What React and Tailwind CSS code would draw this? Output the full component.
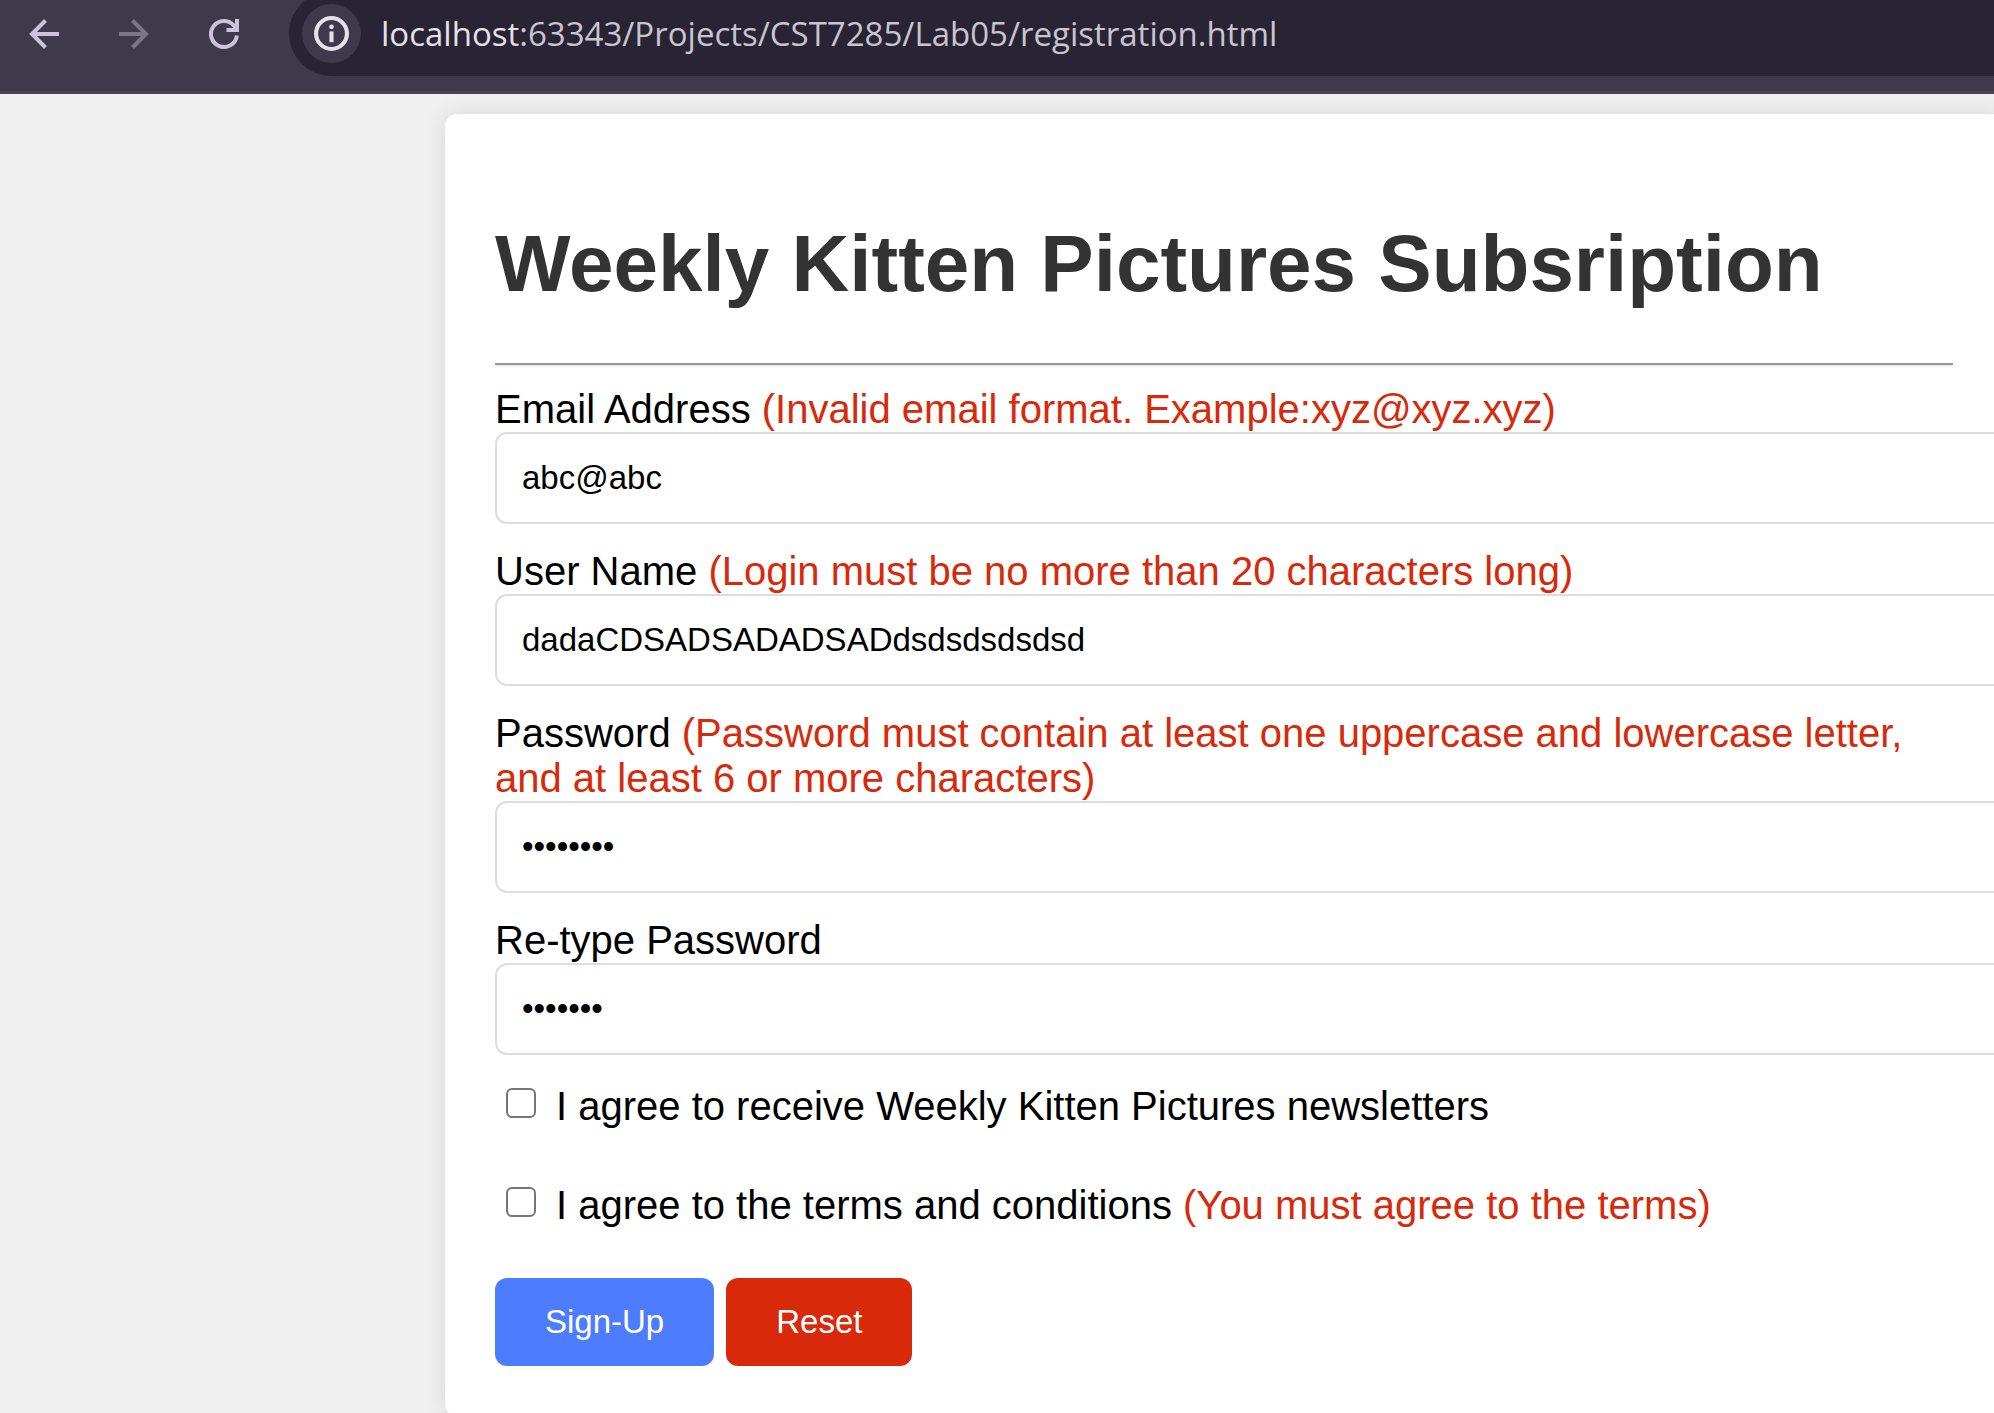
import React from "react";

function BackIcon() {
  return (
    <svg width="30" height="30" viewBox="0 0 30 30" fill="none" stroke="currentColor" strokeWidth="4" aria-hidden="true">
      <path d="M30 15H3M16.5 1.5L3 15l13.5 13.5" />
    </svg>
  );
}

function ForwardIcon() {
  return (
    <svg width="30" height="30" viewBox="0 0 30 30" fill="none" stroke="currentColor" strokeWidth="4" aria-hidden="true">
      <path d="M0 15h27M13.5 1.5L27 15 13.5 28.5" />
    </svg>
  );
}

function ReloadIcon() {
  return (
    <svg width="30" height="30" viewBox="0 0 30 30" fill="none" stroke="currentColor" strokeWidth="4" aria-hidden="true">
      <path d="M27.9 16.5A13 13 0 1 1 25 6.700L27.500 10.500" />
      <path d="M28 0v11H17.500" />
    </svg>
  );
}

function InfoIcon() {
  return (
    <svg width="35" height="35" viewBox="0 0 34 34" fill="none" aria-hidden="true">
      <circle cx="17" cy="17" r="15" stroke="currentColor" strokeWidth="4" />
      <path d="M15 15h4v10.500h-4z" fill="currentColor" />
      <circle cx="17" cy="10.500" r="2.300" fill="currentColor" />
    </svg>
  );
}

function BrowserBar() {
  return (
    <header className="shrink-0 overflow-hidden border-b-3 border-[#49454f] bg-[#3f394c] pb-[15px]">
      <div className="-mt-[9px] flex h-[85px] items-center gap-[60px] pl-[29px] text-[#ccc2dc]">
        <button type="button" aria-label="Back"><BackIcon /></button>
        <button type="button" aria-label="Forward" className="text-[#7c7786]"><ForwardIcon /></button>
        <button type="button" aria-label="Reload"><ReloadIcon /></button>
        <div className="-ml-[10px] flex h-full flex-1 items-center gap-5 rounded-l-full bg-[#282433] pl-[13px]">
          <button
            type="button"
            aria-label="Site information"
            className="flex size-[59px] items-center justify-center rounded-full bg-[#3f394c] text-[#e6e0e9]"
          >
            <InfoIcon />
          </button>
          <div className="whitespace-nowrap font-['Open_Sans','Noto_Sans',sans-serif] text-[33px] text-[#c9c4d0]">
            <span className="text-[#e6e0e9]">localhost</span>:63343/Projects/CST7285/Lab05/registration.html
          </div>
        </div>
      </div>
    </header>
  );
}

function Field({ id, label, error, type, value }) {
  return (
    <div className="mb-[25px]">
      <label htmlFor={id} className="block">
        {label} {error && <span className="text-[#d8290b]">{error}</span>}
      </label>
      <input
        id={id}
        type={type}
        defaultValue={value}
        className="block h-[92px] w-[calc(100%+54px)] rounded-xl border-2 border-[#ddd] bg-white px-[25px] text-[33px] outline-none"
      />
    </div>
  );
}

function Agreement({ id, label, error }) {
  return (
    <div className="flex items-start pl-[11px]">
      <input
        id={id}
        type="checkbox"
        className="mt-1 mr-5 size-[30px] shrink-0 appearance-none rounded-md border-2 border-[#767676] bg-white checked:bg-[#0075ff]"
      />
      <label htmlFor={id}>
        {label} {error && <span className="text-[#d8290b]">{error}</span>}
      </label>
    </div>
  );
}

export default function App() {
  return (
    <div className="flex h-screen flex-col overflow-hidden bg-[#f0f0f0] font-['Liberation_Sans',Arial,sans-serif] text-[40px] leading-[45px] text-black">
      <BrowserBar />
      <main className="flex-1 overflow-hidden pt-5">
        <form
          onSubmit={(e) => e.preventDefault()}
          className="-mr-[9px] ml-[445px] rounded-xl bg-white p-[50px] shadow-[0_0_25px_rgba(0,0,0,0.1)]"
        >
          <h1 className="mt-[54px] mb-[53px] text-[80px] leading-[92px] font-bold text-[#333]">
            Weekly Kitten Pictures Subsription
          </h1>
          <hr className="mb-5 h-1 border-t-2 border-b-2 border-t-[#9a9a9a] border-b-[#eee]" />

          <Field
            id="email"
            label="Email Address"
            error="(Invalid email format. Example:xyz@xyz.xyz)"
            type="text"
            value="abc@abc"
          />
          <Field
            id="login"
            label="User Name"
            error="(Login must be no more than 20 characters long)"
            type="text"
            value="dadaCDSADSADADSADdsdsdsdsdsd"
          />
          <Field
            id="pass"
            label="Password"
            error="(Password must contain at least one uppercase and lowercase letter, and at least 6 or more characters)"
            type="password"
            value="abcdefgh"
          />
          <Field id="pass2" label="Re-type Password" type="password" value="abcdefg" />

          <div className="mt-[29px] flex flex-col gap-[54px]">
            <Agreement id="newsletter" label="I agree to receive Weekly Kitten Pictures newsletters" />
            <Agreement
              id="terms"
              label="I agree to the terms and conditions"
              error="(You must agree to the terms)"
            />
          </div>

          <div className="mt-[50px] flex gap-3 text-[33px] text-white">
            <button type="submit" className="h-[88px] rounded-xl bg-[#4d7cfe] px-[50px] pb-0.5">Sign-Up</button>
            <button type="reset" className="h-[88px] rounded-xl bg-[#d8290b] px-[50px] pb-0.5">Reset</button>
          </div>
        </form>
      </main>
    </div>
  );
}
